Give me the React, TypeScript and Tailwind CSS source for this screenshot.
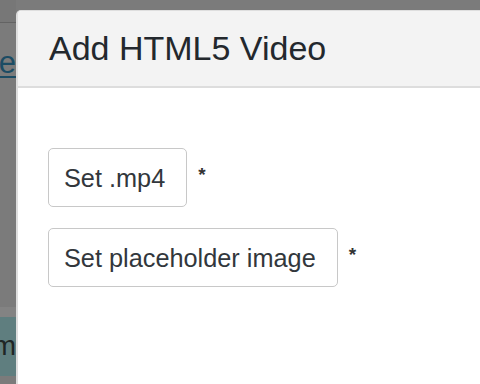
import React from "react";

const font = { fontFamily: '"Liberation Sans", Arial, sans-serif' };

const FileButton = ({ label }: { label: string }) => (
  <div className="flex items-start">
    <button className="h-[59px] rounded-[5px] border border-[#c8c8c8] bg-white pl-[15px] pr-[21px] text-[25.3px] leading-[30px] text-[#32373c]">
      {label}
    </button>
    <span className="ml-[11px] mt-[12px] text-[19px] font-bold leading-[30px] text-[#333]">*</span>
  </div>
);

export default function App() {
  return (
    <div
      className="flex h-[384px] w-[480px] overflow-hidden bg-[#7b7b7b]"
      style={font}
    >
      {/* page underneath the overlay */}
      <div className="flex w-[16px] shrink-0 flex-col">
        <div className="h-[22px] bg-[#777]" />
        <div className="h-[1px] bg-[#636363]" />
        <div className="h-[24px]" />
        <div className="flex h-[32px] justify-end overflow-hidden">
          <span className="whitespace-nowrap text-[31px] leading-[32px] text-[#1b4c64] underline decoration-[2px] underline-offset-[3px]">
            e
          </span>
        </div>
        <div className="h-[228px]" />
        <div className="h-[10px] bg-[#838383]" />
        <div className="flex h-[59px] justify-end overflow-hidden bg-[#5f7e7f] pt-[14px]">
          <span className="whitespace-nowrap text-[28px] leading-[30px] text-[#1f2626]">
            m
          </span>
        </div>
      </div>

      {/* modal */}
      <div className="mt-[10px] flex flex-1 flex-col rounded-tl-[5px] border-l-2 border-t border-[#dedede] bg-white">
        <header className="flex h-[77px] items-center rounded-tl-[4px] border-b-2 border-[#dddddd] bg-[#f3f3f3] pl-[31px]">
          <h1 className="text-[34px] font-normal text-[#23282d]">Add HTML5 Video</h1>
        </header>
        <div className="flex flex-col gap-[21px] pl-[30px] pt-[60px]">
          <FileButton label="Set .mp4" />
          <FileButton label="Set placeholder image" />
        </div>
      </div>
    </div>
  );
}
